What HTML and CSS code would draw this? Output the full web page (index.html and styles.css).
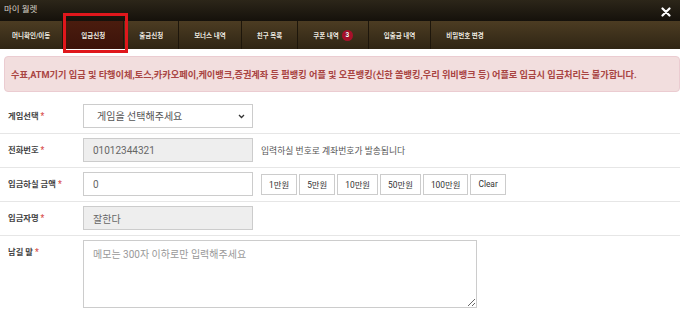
FILE: index.html
```html
<!DOCTYPE html>
<html lang="ko">
<head>
<meta charset="utf-8">
<title>마이 월렛</title>
<link rel="stylesheet" href="styles.css">
</head>
<body>
<div class="modal">
  <div class="modal-head">
    <span class="title">마이 월렛</span>
    <span class="close">
      <svg width="10" height="10" viewBox="0 0 10 10"><path d="M1.5 1.5 L8.5 8.5 M8.5 1.5 L1.5 8.5" stroke="#fff" stroke-width="2.2" stroke-linecap="round"/></svg>
    </span>
  </div>
  <nav class="tabs">
    <a class="tab">머니확인/이동</a>
    <a class="tab active">입금신청</a>
    <a class="tab">출금신청</a>
    <a class="tab">보너스 내역</a>
    <a class="tab">친구 목록</a>
    <a class="tab">쿠폰 내역 <span class="badge">3</span></a>
    <a class="tab">입출금 내역</a>
    <a class="tab">비밀번호 변경</a>
  </nav>
  <div class="alert">수표,ATM기기 입금 및 타행이체,토스,카카오페이,케이뱅크,증권계좌 등 펌뱅킹 어플 및 오픈뱅킹(신한 쏠뱅킹,우리 위비뱅크 등) 어플로 입금시 입금처리는 불가합니다.</div>
  <form class="form">
    <div class="row">
      <label class="label">게임선택 <span class="req">*</span></label>
      <div class="field">
        <div class="select-wrap">
          <select class="control select"><option>게임을 선택해주세요</option></select>
          <svg class="chev" width="7" height="5" viewBox="0 0 7 5"><path d="M1 1 L3.5 3.5 L6 1" fill="none" stroke="#333" stroke-width="1.3"/></svg>
        </div>
      </div>
    </div>
    <div class="row">
      <label class="label">전화번호 <span class="req">*</span></label>
      <div class="field">
        <input class="control readonly" value="01012344321" readonly>
        <span class="help">입력하실 번호로 계좌번호가 발송됩니다</span>
      </div>
    </div>
    <div class="row">
      <label class="label">입금하실 금액 <span class="req">*</span></label>
      <div class="field">
        <input class="control" value="0">
        <div class="btns">
          <button type="button" class="btn">1만원</button>
          <button type="button" class="btn">5만원</button>
          <button type="button" class="btn">10만원</button>
          <button type="button" class="btn">50만원</button>
          <button type="button" class="btn">100만원</button>
          <button type="button" class="btn">Clear</button>
        </div>
      </div>
    </div>
    <div class="row">
      <label class="label">입금자명 <span class="req">*</span></label>
      <div class="field">
        <input class="control readonly" value="잘한다" readonly>
      </div>
    </div>
    <div class="row last">
      <label class="label">남길 말 <span class="req">*</span></label>
      <div class="field">
        <textarea class="control memo" placeholder="메모는 300자 이하로만 입력해주세요"></textarea>
      </div>
    </div>
  </form>
</div>
<div class="highlight"></div>
</body>
</html>
```
FILE: styles.css
```css
html, body {
  margin: 0;
  padding: 0;
  background: #fff;
  overflow: hidden;
}
body {
  font-family: Roboto, "Noto Sans CJK KR", sans-serif;
  color: #333;
  position: relative;
}
.modal {
  width: 680px;
}
.modal-head {
  height: 21px;
  display: flex;
  align-items: center;
  justify-content: space-between;
  padding: 0 9px 0 4px;
  background: linear-gradient(#2c2619, #15110b);
}
.title {
  font-size: 8.5px;
  color: #d8d2c6;
  line-height: 1;
  margin-top: -3px;
}
.close {
  display: flex;
  align-items: center;
  margin-top: 2px;
}
.tabs {
  height: 28px;
  display: flex;
  background: linear-gradient(#4c3c22, #2f2514);
}
.tab {
  display: flex;
  align-items: center;
  justify-content: center;
  padding: 0 15px;
  font-size: 6.5px;
  font-weight: 700;
  color: #f2ece0;
  text-shadow: 0 0 1px rgba(0,0,0,0.6);
  border-left: 1px solid #1d160b;
  white-space: nowrap;
}
.tab:first-child {
  border-left: 0;
  padding: 0 12px;
}
.tab.active {
  background: linear-gradient(#4a1c0e, #3c130a);
  padding: 0 18px;
}
.badge {
  display: inline-flex;
  align-items: center;
  justify-content: center;
  width: 11px;
  height: 11px;
  border-radius: 50%;
  background: #a8102a;
  color: #fff;
  font-size: 6.5px;
  margin-left: 3px;
}
.alert {
  margin: 7px 0 8px 4px;
  height: 34px;
  display: flex;
  align-items: center;
  padding: 0 6px;
  background: #f2dede;
  border: 1px solid #ebccd1;
  border-radius: 4px;
  color: #a94442;
  font-size: 9.2px;
  font-weight: 700;
  white-space: nowrap;
}
.form {
  margin: 0;
}
.row {
  display: grid;
  grid-template-columns: 83px 1fr;
  padding: 4px 0 5px;
  border-bottom: 1px solid #e6e6e6;
}
.row.last {
  border-bottom: 0;
}
.label {
  padding-left: 8px;
  font-size: 8.3px;
  font-weight: 700;
  color: #444;
  line-height: 24px;
}
.req {
  color: #d9534f;
}
.field {
  display: flex;
  align-items: center;
  gap: 8px;
}
.control {
  box-sizing: border-box;
  width: 170px;
  height: 24px;
  border: 1px solid #ccc;
  border-radius: 0;
  background: #fff;
  font-family: Roboto, "Noto Sans CJK KR", sans-serif;
  font-size: 10px;
  color: #666;
  padding: 0 9px;
  margin: 0;
  outline: none;
}
.readonly {
  background: #eee;
}
.select-wrap {
  position: relative;
  display: flex;
}
.select {
  appearance: none;
  -webkit-appearance: none;
  padding-left: 13px;
  color: #555;
}
.chev {
  position: absolute;
  right: 8px;
  top: 10px;
}
.help {
  font-size: 8.8px;
  color: #555;
}
.btns {
  display: flex;
  gap: 2px;
}
.btn {
  height: 21px;
  padding: 0 7px;
  border: 1px solid #ccc;
  background: #fff;
  font-family: Roboto, "Noto Sans CJK KR", sans-serif;
  font-size: 8.4px;
  color: #333;
  border-radius: 0;
}
.memo {
  width: 394px;
  height: 68px;
  padding: 5px 9px;
  resize: vertical;
}
.memo::placeholder {
  color: #999;
}
.highlight {
  position: absolute;
  left: 63px;
  top: 13px;
  width: 59px;
  height: 34px;
  border: 3px solid #e0171c;
  pointer-events: none;
}
```
